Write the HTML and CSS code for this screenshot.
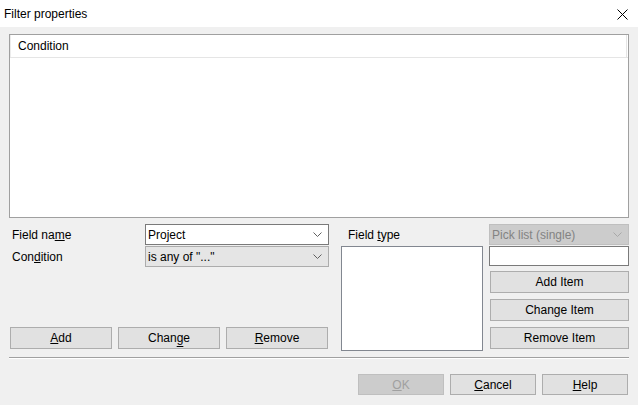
FILE: index.html
```html
<!DOCTYPE html>
<html lang="en">

<head>
    <meta charset="UTF-8">
    <meta name="viewport" content="width=device-width, initial-scale=1.0">
    <title>Filter properties</title>
    <link rel="stylesheet" href="styles.css">
</head>

<body>

    <div class="titlebar">
        <span class="title">Filter properties</span>
        <span class="close">
            <svg width="11" height="11" viewBox="0 0 11 11">
                <path d="M0.5 0.5 L10.5 10.5 M10.5 0.5 L0.5 10.5" stroke="#000" stroke-width="1" fill="none" />
            </svg>
        </span>
    </div>

    <div class="dialog">
        <div class="listview">
            <div class="list-header">
                <div class="header-cell">Condition</div>
            </div>
        </div>

        <div class="lower">
            <div class="left-col">
                <div class="fields">
                    <label class="field-label">Field na<u>m</u>e</label>
                    <div class="combo">
                        <span>Project</span>
                        <svg class="chevron" width="9" height="5" viewBox="0 0 9 5">
                            <path d="M0.5 0.5 L4.5 4.5 L8.5 0.5" stroke="#606060" fill="none" />
                        </svg>
                    </div>
                    <label class="field-label">Con<u>d</u>ition</label>
                    <div class="combo combo-list">
                        <span>is any of "..."</span>
                        <svg class="chevron" width="9" height="5" viewBox="0 0 9 5">
                            <path d="M0.5 0.5 L4.5 4.5 L8.5 0.5" stroke="#606060" fill="none" />
                        </svg>
                    </div>
                </div>
                <div class="button-row">
                    <button><u>A</u>dd</button>
                    <button>Chan<u class="low">g</u>e</button>
                    <button><u>R</u>emove</button>
                </div>
            </div>

            <div class="middle-col">
                <div class="type-label"><span>Field <u>t</u>ype</span></div>
                <div class="listbox"></div>
            </div>

            <div class="right-col">
                <div class="combo combo-disabled">
                    <span>Pick list (single)</span>
                    <svg class="chevron" width="9" height="5" viewBox="0 0 9 5">
                        <path d="M0.5 0.5 L4.5 4.5 L8.5 0.5" stroke="#a8a8a8" fill="none" />
                    </svg>
                </div>
                <div class="textbox"></div>
                <button class="item-button first">Add Item</button>
                <button class="item-button">Change Item</button>
                <button class="item-button">Remove Item</button>
            </div>
        </div>

        <div class="separator"></div>

        <div class="footer">
            <button class="disabled"><u>O</u>K</button>
            <button><u>C</u>ancel</button>
            <button><u>H</u>elp</button>
        </div>
    </div>

</body>

</html>
```

FILE: styles.css
```css
body {
    font-family: "Liberation Sans", Arial, sans-serif;
    font-size: 12px;
    margin: 0;
    padding: 0;
    width: 638px;
    height: 405px;
    overflow: hidden;
    background-color: #f0f0f0;
    color: #000;
}

u {
    text-decoration: underline;
    text-underline-offset: 1px;
    text-decoration-skip-ink: none;
}

u.low {
    text-underline-offset: 4px;
}

.titlebar {
    height: 27px;
    background-color: #fff;
    display: flex;
    align-items: center;
    justify-content: space-between;
    padding: 0 10px 0 4px;
}

.title {
    font-size: 12px;
}

.close {
    display: flex;
    align-items: center;
    margin-top: 1px;
}

.dialog {
    padding: 7px 9px 0 9px;
}

.listview {
    height: 182px;
    border: 1px solid #a0a0a0;
    background-color: #fff;
}

.list-header {
    height: 22px;
    border-bottom: 1px solid #e5e5e5;
    display: flex;
}

.header-cell {
    flex: 1;
    display: flex;
    align-items: center;
    padding-left: 7px;
    border-left: 1px solid #ececec;
    border-right: 1px solid #e5e5e5;
    margin-right: 1px;
}

.lower {
    display: flex;
    margin-top: 6px;
    height: 127px;
}

.left-col {
    width: 320px;
    display: flex;
    flex-direction: column;
    justify-content: space-between;
    padding-bottom: 2px;
    box-sizing: border-box;
}

.fields {
    display: grid;
    grid-template-columns: 136px 184px;
    grid-auto-rows: 21px;
    row-gap: 1px;
    align-items: center;
}

.field-label {
    padding-left: 3px;
}

.combo {
    height: 21px;
    box-sizing: border-box;
    border: 1px solid #7a7a7a;
    background-color: #fff;
    display: flex;
    align-items: center;
    justify-content: space-between;
    padding: 0 6px 0 2px;
}

.combo-list {
    background-color: #e5e5e5;
    border-color: #acacac;
}

.combo-disabled {
    background-color: #cccccc;
    border-color: #bfbfbf;
    color: #838383;
}

.chevron {
    display: block;
}

.button-row {
    display: flex;
    gap: 6px;
    padding-left: 1px;
}

button {
    font-family: "Liberation Sans", Arial, sans-serif;
    font-size: 12px;
    color: #000;
    background-color: #e1e1e1;
    border: 1px solid #adadad;
    border-radius: 0;
    padding: 0;
    margin: 0;
    box-sizing: border-box;
}

.button-row button {
    width: 102px;
    height: 22px;
}

.middle-col {
    width: 142px;
    margin-left: 12px;
    display: flex;
    flex-direction: column;
}

.type-label {
    height: 21px;
    display: flex;
    align-items: center;
    padding-left: 7px;
}

.listbox {
    margin-top: 1px;
    height: 105px;
    box-sizing: border-box;
    border: 1px solid #828790;
    background-color: #fff;
}

.right-col {
    width: 140px;
    margin-left: 6px;
    display: flex;
    flex-direction: column;
}

.textbox {
    margin-top: 1px;
    height: 20px;
    box-sizing: border-box;
    border: 1px solid #7a7a7a;
    background-color: #fff;
}

.item-button {
    height: 22px;
    margin-top: 6px;
    margin-left: 1px;
}

.item-button.first {
    margin-top: 5px;
}

.separator {
    margin-top: 6px;
    height: 1px;
    background-color: #a0a0a0;
    border-bottom: 1px solid #fff;
}

.footer {
    display: flex;
    justify-content: flex-end;
    gap: 6px;
    margin-top: 15px;
    padding-right: 1px;
}

.footer button {
    width: 86px;
    height: 21px;
}

.footer button.disabled {
    background-color: #cccccc;
    border-color: #bfbfbf;
    color: #a0a0a0;
}
```
